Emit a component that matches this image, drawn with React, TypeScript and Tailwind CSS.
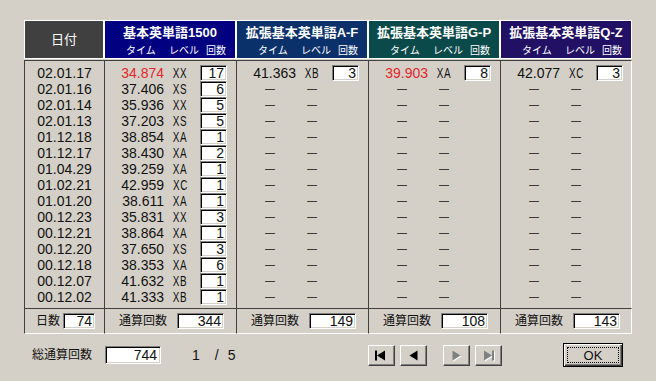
import React from "react";

type Row = { date: string; time: string; level: string; count: string; red?: boolean };

const rows: Row[] = [
  { date: "02.01.17", time: "34.874", level: "XX", count: "17", red: true },
  { date: "02.01.16", time: "37.406", level: "XS", count: "6" },
  { date: "02.01.14", time: "35.936", level: "XX", count: "5" },
  { date: "02.01.13", time: "37.203", level: "XS", count: "5" },
  { date: "01.12.18", time: "38.854", level: "XA", count: "1" },
  { date: "01.12.17", time: "38.430", level: "XA", count: "2" },
  { date: "01.04.29", time: "39.259", level: "XA", count: "1" },
  { date: "01.02.21", time: "42.959", level: "XC", count: "1" },
  { date: "01.01.20", time: "38.611", level: "XA", count: "1" },
  { date: "00.12.23", time: "35.831", level: "XX", count: "3" },
  { date: "00.12.21", time: "38.864", level: "XA", count: "1" },
  { date: "00.12.20", time: "37.650", level: "XS", count: "3" },
  { date: "00.12.18", time: "38.353", level: "XA", count: "6" },
  { date: "00.12.07", time: "41.632", level: "XB", count: "1" },
  { date: "00.12.02", time: "41.333", level: "XB", count: "1" },
];

// sunken edit box (classic windows look)
const edit =
  "bg-white border border-t-[#808080] border-l-[#808080] border-b-white border-r-white shadow-[inset_1px_1px_0_#000,inset_-1px_-1px_0_#d4d0c8]";

function DataRow({ row }: { row: Row }) {
  return (
    <div className="flex h-[16px] items-center pl-[7px] text-[14px] leading-[16px]">
      <span className={`w-[52px] text-right ${row.red ? "text-[#e4262c]" : ""}`}>{row.time}</span>
      <span className="ml-[2px] w-[28px] text-center">
        <span className="inline-block scale-x-[0.66] text-[15px] tracking-[1px]">{row.level}</span>
      </span>
      <span className={`ml-[6px] h-[16px] w-[27px] pr-[2px] text-right leading-[14px] ${edit}`}>
        {row.count}
      </span>
    </div>
  );
}

function DashRow() {
  return (
    <div className="flex h-[16px] items-center pl-[7px] text-[10px] leading-[14px]">
      <span className="w-[52px] text-center">—</span>
      <span className="ml-[2px] w-[28px] text-center">—</span>
    </div>
  );
}

function ScoreColumn({
  title,
  color,
  data,
  total,
  last,
}: {
  title: string;
  color: string;
  data: Row[];
  total: string;
  last?: boolean;
}) {
  const dashes = Array.from({ length: 15 - data.length });
  return (
    <div className="flex w-[132px] flex-col">
      <div className={`mb-px h-[39px] border border-white text-white ${color}`}>
        <div className="mt-[4px] h-[16px] text-center text-[13px] font-bold leading-[16px]">{title}</div>
        <div className="mt-[3px] flex h-[13px] pl-[21px] text-[10px] leading-[13px]">
          <span className="w-[43px]">タイム</span>
          <span className="w-[37px]">レベル</span>
          <span>回数</span>
        </div>
      </div>
      <div
        className={`h-[248px] border-l border-t border-[#404040] pt-[4px] ${
          last ? "border-r border-r-white" : ""
        }`}
      >
        {data.map((r, i) => (
          <DataRow key={i} row={r} />
        ))}
        {dashes.map((_, i) => (
          <DashRow key={"d" + i} />
        ))}
      </div>
      <div
        className={`flex h-[26px] items-center border-l border-t border-b border-[#404040] border-b-white pl-[14px] text-[12px] ${
          last ? "border-r border-r-white" : ""
        }`}
      >
        <span>通算回数</span>
        <span className={`ml-[10px] h-[16px] w-[47px] pr-[2px] text-right text-[14px] leading-[14px] ${edit}`}>
          {total}
        </span>
      </div>
    </div>
  );
}

function NavButton({ children }: { children: React.ReactNode }) {
  return (
    <div className="h-[21px] w-[27px] border border-t-white border-l-white border-r-[#404040] border-b-[#404040] shadow-[inset_-1px_-1px_0_#808080]">
      <svg width="25" height="19" viewBox="0 0 25 19">
        {children}
      </svg>
    </div>
  );
}

export default function App() {
  return (
    <div className="h-[381px] w-[656px] overflow-hidden bg-[#d4d0c8] font-['Liberation_Sans','Noto_Sans_CJK_JP',sans-serif] text-[#111]">
      <div className="ml-[24px] flex w-[608px] pt-[20px]">
        {/* 日付 */}
        <div className="flex w-[80px] flex-col">
          <div className="mb-px flex h-[39px] items-center justify-center border border-white bg-[#404040] text-[13px] text-white">
            日付
          </div>
          <div className="h-[248px] border-l border-t border-[#404040] pt-[4px]">
            {rows.map((r) => (
              <div key={r.date} className="h-[16px] text-center text-[14px] leading-[16px]">
                {r.date}
              </div>
            ))}
          </div>
          <div className="flex h-[26px] items-center border-l border-t border-b border-[#404040] border-b-white pl-[11px] text-[12px]">
            <span>日数</span>
            <span className={`ml-[3px] h-[16px] w-[32px] pr-[2px] text-right text-[14px] leading-[14px] ${edit}`}>
              74
            </span>
          </div>
        </div>

        <ScoreColumn title="基本英単語1500" color="bg-[#000080]" data={rows} total="344" />
        <ScoreColumn
          title="拡張基本英単語A-F"
          color="bg-[#0b316b]"
          data={[{ date: "", time: "41.363", level: "XB", count: "3" }]}
          total="149"
        />
        <ScoreColumn
          title="拡張基本英単語G-P"
          color="bg-[#0b4a4a]"
          data={[{ date: "", time: "39.903", level: "XA", count: "8", red: true }]}
          total="108"
        />
        <ScoreColumn
          title="拡張基本英単語Q-Z"
          color="bg-[#211064]"
          data={[{ date: "", time: "42.077", level: "XC", count: "3" }]}
          total="143"
          last
        />
      </div>

      {/* bottom bar */}
      <div className="flex h-[42px] items-center pl-[32px]">
        <span className="text-[12px]">総通算回数</span>
        <span className={`ml-[13px] h-[18px] w-[56px] pr-[3px] text-right text-[14px] leading-[16px] ${edit}`}>
          744
        </span>
        <div className="ml-[31px] flex w-[48px] text-[14px]">
          <span>1</span>
          <span className="ml-[15px]">/</span>
          <span className="ml-[9px]">5</span>
        </div>
        <div className="ml-[128px] flex">
          <NavButton>
            <rect x="6" y="4.5" width="2" height="10" fill="#000" />
            <polygon points="8,9.5 16,4.5 16,14.5" fill="#000" />
          </NavButton>
          <div className="ml-[5px]">
            <NavButton>
              <polygon points="8.5,9.5 16.5,4.5 16.5,14.5" fill="#000" />
            </NavButton>
          </div>
          <div className="ml-[16px]">
            <NavButton>
              <polygon points="9.5,5.5 9.5,15.5 17.5,10.5" fill="#fff" />
              <polygon points="8.5,4.5 8.5,14.5 16.5,9.5" fill="#808080" />
            </NavButton>
          </div>
          <div className="ml-[5px]">
            <NavButton>
              <polygon points="9,5.5 9,15.5 17,10.5" fill="#fff" />
              <rect x="17" y="5.5" width="2" height="10" fill="#fff" />
              <polygon points="8,4.5 8,14.5 16,9.5" fill="#808080" />
              <rect x="16" y="4.5" width="2" height="10" fill="#808080" />
            </NavButton>
          </div>
        </div>
        <div className="ml-[61px] h-[24px] w-[60px] border border-black p-[3px] shadow-[inset_1px_1px_0_#fff,inset_-1px_-1px_0_#404040,inset_-2px_-2px_0_#808080]">
          <div className="flex h-full w-full items-center justify-center border border-dotted border-black text-[13px] leading-none">
            OK
          </div>
        </div>
      </div>
    </div>
  );
}
